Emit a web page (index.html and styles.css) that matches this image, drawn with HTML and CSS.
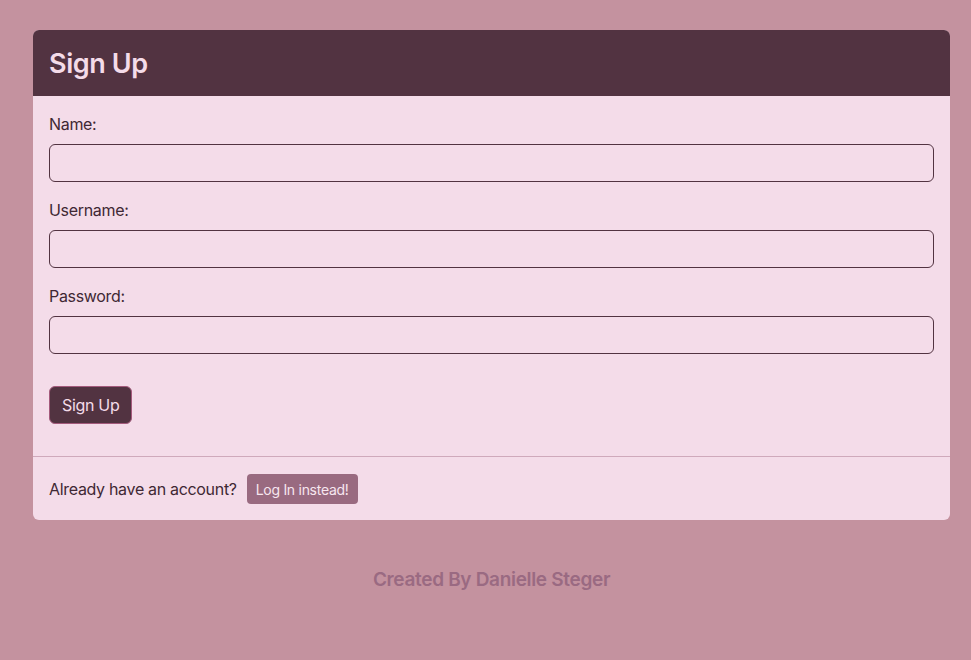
FILE: index.html
```html
<!DOCTYPE html>
<html lang="en">
<head>
<meta charset="utf-8">
<title>Sign Up</title>
<link rel="stylesheet" href="styles.css">
</head>
<body>
<main class="container">
  <section class="card">
    <header class="card-header"><h1>Sign Up</h1></header>
    <form class="card-body">
      <div class="field">
        <label for="name">Name:</label>
        <input id="name" type="text">
      </div>
      <div class="field">
        <label for="username">Username:</label>
        <input id="username" type="text">
      </div>
      <div class="field">
        <label for="password">Password:</label>
        <input id="password" type="password">
      </div>
      <button type="button" class="btn-primary">Sign Up</button>
    </form>
    <footer class="card-footer">
      <span>Already have an account?</span>
      <button type="button" class="btn-small">Log In instead!</button>
    </footer>
  </section>
  <p class="credit">Created By Danielle Steger</p>
</main>
</body>
</html>
```
FILE: styles.css
```css
* { box-sizing: border-box; }
html, body { margin: 0; padding: 0; }
body {
  background: #c4929f;
  font-family: Inter, "Noto Sans", "Liberation Sans", sans-serif;
  color: #3f2834;
  font-size: 16px;
  line-height: 24px;
  letter-spacing: -0.02em;
}
.container {
  margin: 30px 21px 0 33px;
}
.card {
  background: #f4dce9;
  border-radius: 6px;
  overflow: hidden;
}
.card-header {
  background: #523341;
  padding: 2px 16px 0;
  height: 66px;
  display: flex;
  align-items: center;
}
.card-header h1 {
  margin: 0;
  font-size: 27px;
  font-weight: 560;
  color: #f4dce9;
  letter-spacing: -0.015em;
}
.card-body {
  padding: 16px 16px 32px;
  display: flex;
  flex-direction: column;
  align-items: flex-start;
}
.field {
  width: 100%;
  display: flex;
  flex-direction: column;
  margin-bottom: 16px;
}
.field label {
  margin-bottom: 8px;
}
.field input {
  height: 38px;
  width: 100%;
  border: 1px solid #523341;
  border-radius: 6px;
  background: #f4dce9;
  font: inherit;
  padding: 6px 12px;
}
.btn-primary {
  margin-top: 16px;
  height: 38px;
  padding: 6px 12px;
  font: inherit;
  letter-spacing: -0.02em;
  color: #f4dce9;
  background: #523341;
  border: 1px solid #a45a7c;
  border-radius: 6px;
}
.card-footer {
  border-top: 1px solid #cfa9bb;
  padding: 17px 16px 16px;
  display: flex;
  align-items: center;
  gap: 10px;
}
.btn-small {
  height: 30px;
  padding: 4px 9px;
  font-family: inherit;
  font-size: 14px;
  letter-spacing: -0.02em;
  color: #f7e6ef;
  background: #996a80;
  border: none;
  border-radius: 4px;
}
.credit {
  margin: 48px 0 0;
  text-align: center;
  font-size: 19px;
  font-weight: 600;
  color: #9a6a82;
}
```
